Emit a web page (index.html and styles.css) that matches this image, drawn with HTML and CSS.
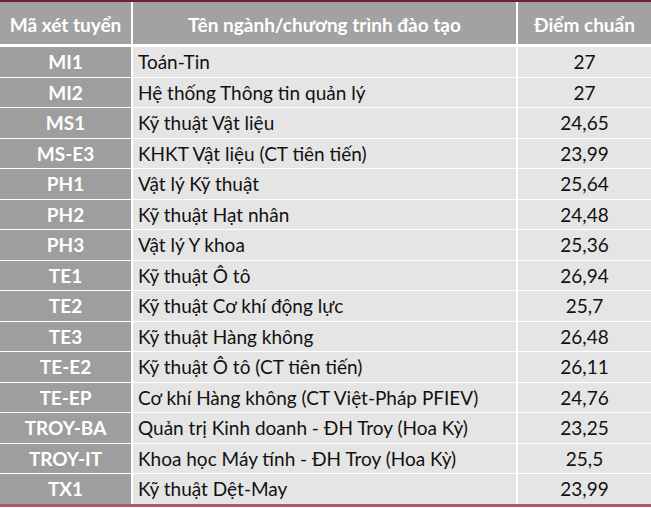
FILE: index.html
```html
<!DOCTYPE html>
<html lang="vi">
<head>
<meta charset="utf-8">
<link rel="stylesheet" href="styles.css">
</head>
<body>
<div class="frame">
  <div class="head">
    <div class="hc">Mã xét tuyển</div>
    <div class="hc">Tên ngành/chương trình đào tạo</div>
    <div class="hc">Điểm chuẩn</div>
  </div>
  <div class="body">
    <div class="code">MI1</div><div class="name">Toán-Tin</div><div class="score">27</div>
    <div class="code">MI2</div><div class="name">Hệ thống Thông tin quản lý</div><div class="score">27</div>
    <div class="code">MS1</div><div class="name">Kỹ thuật Vật liệu</div><div class="score">24,65</div>
    <div class="code">MS-E3</div><div class="name">KHKT Vật liệu (CT tiên tiến)</div><div class="score">23,99</div>
    <div class="code">PH1</div><div class="name">Vật lý Kỹ thuật</div><div class="score">25,64</div>
    <div class="code">PH2</div><div class="name">Kỹ thuật Hạt nhân</div><div class="score">24,48</div>
    <div class="code">PH3</div><div class="name">Vật lý Y khoa</div><div class="score">25,36</div>
    <div class="code">TE1</div><div class="name">Kỹ thuật Ô tô</div><div class="score">26,94</div>
    <div class="code">TE2</div><div class="name">Kỹ thuật Cơ khí động lực</div><div class="score">25,7</div>
    <div class="code">TE3</div><div class="name">Kỹ thuật Hàng không</div><div class="score">26,48</div>
    <div class="code">TE-E2</div><div class="name">Kỹ thuật Ô tô (CT tiên tiến)</div><div class="score">26,11</div>
    <div class="code">TE-EP</div><div class="name">Cơ khí Hàng không (CT Việt-Pháp PFIEV)</div><div class="score">24,76</div>
    <div class="code">TROY-BA</div><div class="name">Quản trị Kinh doanh - ĐH Troy (Hoa Kỳ)</div><div class="score">23,25</div>
    <div class="code">TROY-IT</div><div class="name">Khoa học Máy tính - ĐH Troy (Hoa Kỳ)</div><div class="score">25,5</div>
    <div class="code">TX1</div><div class="name">Kỹ thuật Dệt-May</div><div class="score">23,99</div>
  </div>
</div>
</body>
</html>
```
FILE: styles.css
```css
html, body {
  margin: 0;
  padding: 0;
  background: #ffffff;
}
.frame {
  width: 651px;
  height: 508px;
  box-sizing: border-box;
  border-top: 2px solid #6e2333;
  background: #ffffff;
  font-family: Lato, "Noto Sans", sans-serif;
  font-size: 19px;
}
.head {
  display: grid;
  grid-template-columns: 131px 1fr 133px;
  column-gap: 2px;
  height: 42px;
  margin-bottom: 3px;
}
.hc {
  background: #a2a2a2;
  color: #ffffff;
  font-weight: 700;
  font-size: 19px;
  display: flex;
  align-items: center;
  justify-content: center;
  padding-top: 2px;
}
.body {
  display: grid;
  grid-template-columns: 131px 1fr 133px;
  column-gap: 2px;
  row-gap: 1px;
  grid-auto-rows: 29.5px;
  border-bottom: 3px solid #b5576a;
}
.code {
  background: #9e9e9e;
  color: #ffffff;
  font-weight: 700;
  display: flex;
  align-items: center;
  justify-content: center;
}
.name {
  background: #e5e5e5;
  color: #111111;
  display: flex;
  align-items: center;
  padding-left: 5px;
}
.score {
  background: #e5e5e5;
  color: #111111;
  display: flex;
  align-items: center;
  justify-content: center;
}
```
